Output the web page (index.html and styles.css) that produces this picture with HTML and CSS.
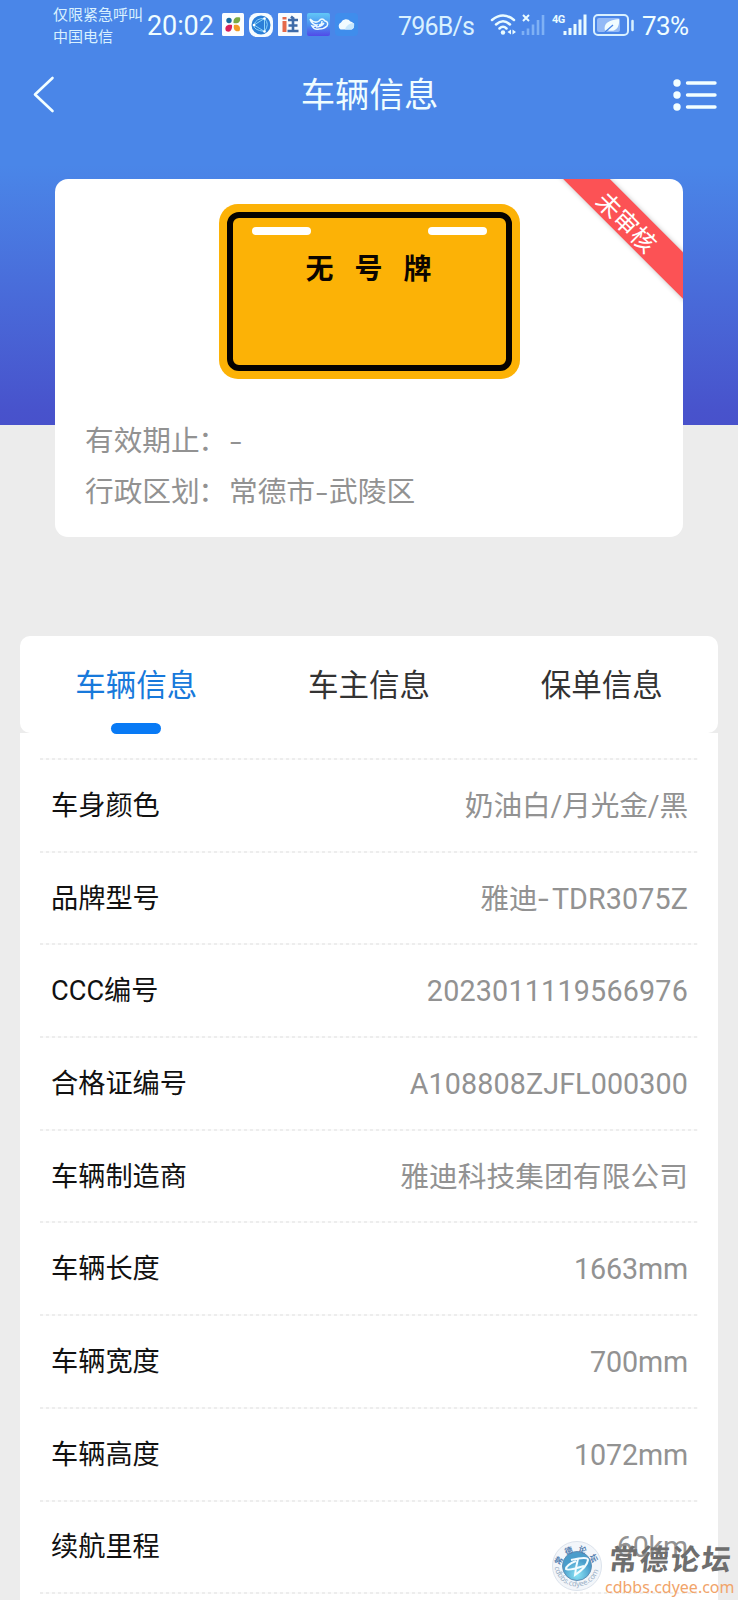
FILE: index.html
```html
<!DOCTYPE html>
<html lang="zh-CN">
<head>
<meta charset="utf-8">
<title>车辆信息</title>
<link rel="stylesheet" href="styles.css">
</head>
<body>
<div class="screen">
  <header class="hero">
    <div class="status">
      <div class="carrier"><span>仅限紧急呼叫</span><span>中国电信</span></div>
      <div class="clock">20:02</div>
      <div class="apps">
        <svg width="22" height="23" viewBox="0 0 22 23"><rect width="22" height="23" rx="1.5" fill="#fbfdff"/><circle cx="7" cy="7.5" r="2.7" fill="#176aa0"/><path d="M11.5 10C11 5 14 3.5 18 4.5C19 9 16 11 11.500 10Z" fill="#79a944"/><path d="M10 12C10.500 17 8 20 4 18C2 14 5 11 10 12Z" fill="#d81f5b"/><path d="M12 12C17 11 19 14 17.500 18C13 19.500 11 16 12 12Z" fill="#f29b24"/></svg>
        <svg width="24" height="24" viewBox="0 0 24 24"><rect width="24" height="24" rx="8" fill="#f7fcff"/><circle cx="12" cy="12" r="9.500" fill="#2b7fd8"/><path d="M5 12L15.500 5.500V18.500ZM15.500 5.500Q21 11 15.500 18.500M5 12Q4 17 15.500 18.500M5 12Q7 5 15.500 5.500" fill="none" stroke="#8fd4fa" stroke-width="1"/><circle cx="5" cy="12" r="1.300" fill="#fff"/><circle cx="15.500" cy="5.500" r="1.300" fill="#fff"/><circle cx="15.500" cy="18.500" r="1.300" fill="#fff"/></svg>
        <svg width="24" height="23" viewBox="0 0 24 23"><rect width="24" height="23" rx="1" fill="#f8fbff"/><path d="M6.500 8V19M6.500 4V6.500" stroke="#e5694a" stroke-width="4" fill="none"/><path d="M10 7H20M10.500 12.500H19.500M9.500 18H20.500M15 7V18M13 3.500L16 6" stroke="#3e6aa8" stroke-width="2.600" fill="none"/></svg>
        <svg width="23" height="23" viewBox="0 0 23 23"><defs><linearGradient id="sky" x2="0" y2="1"><stop stop-color="#61c8f7"/><stop offset=".55" stop-color="#4a8df0"/><stop offset="1" stop-color="#524ae8"/></linearGradient></defs><rect width="23" height="23" rx="2" fill="url(#sky)"/><path d="M3 6Q8 11 12 8Q15 4 18 8Q22 9 20 13Q17 16 12 16Q7 17 5 13Q8 14 10 12Q5 12 3 6M9 14Q14 14 17 10M12 12Q15 12 15 8" fill="none" stroke="#eefaff" stroke-width="1.500"/></svg>
        <svg width="24" height="23" viewBox="0 0 24 23"><rect width="23" height="23" rx="4" fill="#3f8dec"/><path d="M5.500 16.500A4 4 0 0 1 6 9.500A5.500 5.500 0 0 1 15.500 8.500A4.200 4.200 0 0 1 16.500 16.500Z" fill="#f2fbff"/><path d="M10 16.500Q12 10 19 10Q20 15 16.500 16.500Z" fill="#c8e7fc"/></svg>
      </div>
      <div class="speed">796B/s</div>
      <svg class="radio" width="147" height="26" viewBox="0 0 147 26">
        <g fill="none" stroke="#e9fbff" stroke-width="2.500" stroke-linecap="round"><path d="M2 8Q13 -1 24 8M6 12.500Q13 6 20 12.500M9.500 16.500Q13 13 16.500 16.500"/></g>
        <circle cx="13" cy="20.500" r="2.200" fill="#e9fbff"/><path d="M21 17.500V22.500L17.500 20ZM22.500 17.500V22.500L26 20Z" fill="#e9fbff"/>
        <path d="M33 3L39 9M39 3L33 9" stroke="#e9fbff" stroke-width="2"/>
        <path d="M33 19V23M38 16.500V23M43 12.500V23M48 8V23M53 3V23" stroke="#7fb1f5" stroke-width="2.600"/>
        <text x="62" y="11" class="net">4G</text>
        <path d="M75 19V23M80 16V23M85 12V23M90 7.500V23M95 2.500V23" stroke="#e9fbff" stroke-width="3"/>
        <rect x="104" y="3" width="34" height="20" rx="4" fill="none" stroke="#d8f0ff" stroke-width="2"/><rect x="107" y="6" width="23" height="14" rx="2" fill="#93b9f6"/><path d="M115 19C113 11 119 8 129 7C130 16 125 21 117 18Z" fill="#f1fcff"/><path d="M115 20L123 13" stroke="#4a86e8" stroke-width="1.300"/><path d="M142.500 9V18" stroke="#d8f0ff" stroke-width="2.500" stroke-linecap="round"/>
      </svg>
      <div class="battery">73%</div>
    </div>
    <nav class="navbar">
      <svg width="22" height="38" viewBox="0 0 22 38"><path d="M19.500 2L2 18.500L19.500 35" fill="none" stroke="#f3ffff" stroke-width="2.600" stroke-linecap="round" stroke-linejoin="round"/></svg>
      <h1 class="title">车辆信息</h1>
      <svg width="44" height="34" viewBox="0 0 44 34"><g fill="#f3ffff"><circle cx="4" cy="5" r="3.700"/><circle cx="4" cy="17" r="3.700"/><circle cx="4" cy="29" r="3.700"/></g><path d="M14.500 5H42M14.500 17H42M14.500 29H42" stroke="#f3ffff" stroke-width="3.400" stroke-linecap="round"/></svg>
    </nav>
  </header>

  <section class="card">
    <div class="ribbon">未审核</div>
    <div class="plate"><div class="plate-frame">
      <div class="slots"><i></i><i></i></div>
      <div class="plate-text">无号牌</div>
    </div></div>
    <div class="facts">
      <div class="fact"><span class="fact-label">有效期止<span class="colon">：</span></span><span class="dash">-</span></div>
      <div class="fact"><span class="fact-label">行政区划<span class="colon">：</span></span><span>常德市<span class="dash">-</span>武陵区</span></div>
    </div>
  </section>

  <section class="details">
    <div class="tabs">
      <div class="tab active">车辆信息</div>
      <div class="tab">车主信息</div>
      <div class="tab">保单信息</div>
    </div>
    <div class="list">
      <div class="row"><span>车身颜色</span><span class="value color">奶油白/月光金/黑</span></div>
      <div class="row"><span>品牌型号</span><span class="value">雅迪<span class="dash">-</span>TDR3075Z</span></div>
      <div class="row"><span>CCC编号</span><span class="value serial">2023011119566976</span></div>
      <div class="row"><span>合格证编号</span><span class="value">A108808ZJFL000300</span></div>
      <div class="row"><span>车辆制造商</span><span class="value">雅迪科技集团有限公司</span></div>
      <div class="row"><span>车辆长度</span><span class="value length">1663mm</span></div>
      <div class="row"><span>车辆宽度</span><span class="value length">700mm</span></div>
      <div class="row"><span>车辆高度</span><span class="value length">1072mm</span></div>
      <div class="row"><span>续航里程</span><span class="value length">60km</span></div>
    </div>
  </section>

  <div class="watermark">
    <svg class="seal" width="52" height="52" viewBox="0 0 52 52">
      <defs><radialGradient id="orb" cx=".5" cy=".8"><stop stop-color="#8ce4f5"/><stop offset="1" stop-color="#4a9dcb"/></radialGradient><path id="arcTop" d="M9 29A17 17 0 1 1 43 29"/><path id="arcBottom" d="M3.500 24A22.500 22.500 0 0 0 48.500 24"/></defs>
      <circle cx="26" cy="26" r="24.500" fill="#f3f6fa" stroke="#dce3ec"/><circle cx="26" cy="26" r="14.500" fill="url(#orb)" stroke="#608eb4"/>
      <path d="M20 20Q37 16 37 20Q36 27 24 35Q25 26 27 19M25 21Q15 25 15 29Q17 31 33 26" fill="none" stroke="#f2fcff" stroke-width="2"/>
      <text class="seal-cn"><textPath href="#arcTop" startOffset="3">常德论坛</textPath></text>
      <text class="seal-en"><textPath href="#arcBottom" startOffset="3">cdbbs.cdyee.com</textPath></text>
    </svg>
    <div class="mark-text"><div class="mark-name">常德论坛</div><div class="mark-url">cdbbs.cdyee.com</div></div>
  </div>
</div>
</body>
</html>
```
FILE: styles.css
```css
* { box-sizing: border-box; }
body { margin: 0; font-family: "Noto Sans", "Noto Sans CJK SC", sans-serif; }
.screen { position: relative; width: 738px; height: 1600px; overflow: hidden; background: #ececec; }
.hero { height: 425px; background: linear-gradient(#4a86e8 0, #4a86e8 165px, #4853cc 410px, #4851cb); color: #effdff; }
.status { display: flex; height: 50px; padding-left: 53px; white-space: nowrap; font-family: "Roboto", sans-serif; }
.carrier { width: 94px; padding-top: 3px; font-size: 15px; line-height: 22px; display: flex; flex-direction: column; color: #d9f1ff; font-family: "Noto Sans CJK SC", sans-serif; }
.clock { width: 75px; font-size: 27px; line-height: 53px; letter-spacing: -.1px; }
.apps { display: flex; gap: 5px; width: 176px; padding-top: 13px; }
.speed { width: 92px; font-size: 25px; line-height: 53px; letter-spacing: -.8px; color: #d9f1ff; }
.radio { margin-top: 12px; flex: none; }
.net { font: 700 11px "Roboto", sans-serif; fill: #e9fbff; letter-spacing: -.5px; }
.battery { margin-left: 5px; font-size: 26px; line-height: 53px; letter-spacing: -.6px; }
.navbar { display: flex; align-items: center; justify-content: space-between; height: 90px; padding: 0 21px 0 33px; }
.title { margin: -6px 0 0 11px; font: 400 34.400px/50px "Noto Sans CJK SC", sans-serif; }
.card { position: relative; width: 628px; height: 358px; margin: -246px auto 0 55px; padding: 25px 30px; overflow: hidden; border-radius: 13px; background: #fff; }
.ribbon { position: absolute; left: 472px; top: 24px; width: 200px; height: 33px; padding-left: 3px; transform: rotate(45deg); background: #fc5255; color: #fff; text-align: center; font: 24.500px/35px "Noto Sans CJK SC", sans-serif; box-shadow: 0 0 5px rgba(0,0,0,.25); }
.plate { width: 301px; height: 175px; margin: 0 auto 0 133.500px; padding: 8px; border-radius: 19px; background: #fcb206; }
.plate-frame { height: 159px; border: 6px solid #050200; border-radius: 12px; padding: 9px 19px; }
.slots { display: flex; justify-content: space-between; }
.slots i { width: 59px; height: 8px; border-radius: 4px; background: #fff; }
.plate-text { margin-top: 11px; padding-left: 20px; text-align: center; font: 700 28px/42px "Noto Sans CJK SC", sans-serif; letter-spacing: 21px; color: #0b0500; }
.facts { margin-top: 34px; font-size: 28.700px; line-height: 51px; color: #929292; font-family: "Noto Sans CJK SC", sans-serif; }
.fact { display: flex; }
.fact-label { width: 144px; }
.colon { margin-left: -1.500px; }
.dash { display: inline-block; width: 14px; text-align: left; transform: scaleX(1.35); transform-origin: left center; }
.details { margin: 99px 20px 0; }
.tabs { display: grid; grid-template-columns: repeat(3, 1fr); height: 97px; border-radius: 10px; background: #fff; }
.tab { display: flex; flex-direction: column; align-items: center; font: 30.500px/94px "Noto Sans CJK SC", sans-serif; color: #333; }
.tab.active { color: #1779db; }
.tab.active::after { content: ""; width: 50px; height: 11px; margin-top: -7px; border-radius: 6px; background: #087af5; }
.list { padding: 25px 17px 0; background: #fff; height: 880px; }
.list::before, .row::after { content: ""; display: block; height: 2px; background: repeating-linear-gradient(90deg, #ededed 0 3px, #fbfbfb 3px 6px); }
.list::before { margin: 0 3px; }
.row { display: grid; grid-template-columns: auto auto; grid-template-rows: 1fr 2px; justify-content: space-between; align-items: center; height: 92.700px; padding: 1px 13px 0 14px; font: 27.200px/40px "Roboto", "Noto Sans CJK SC", sans-serif; color: #111; }
.row::after { grid-column: 1 / -1; margin: 0 -10px 0 -11px; }
.value { font-size: 28.700px; letter-spacing: .1px; color: #929292; text-align: right; }
.color { letter-spacing: -.15px; }
.serial { letter-spacing: .2px; }
.length { letter-spacing: -.15px; }
.watermark { position: absolute; left: 551px; top: 1540px; display: flex; gap: 2px; }
.seal { overflow: visible; flex: none; }
.mark-text { width: 132px; }
.mark-name { margin-top: -4px; padding-left: 4px; font: 700 29px/42px "Noto Sans CJK SC", serif; letter-spacing: 2px; color: #6e6e6e; white-space: nowrap; transform: skewX(-6deg); }
.mark-url { font: 16px/18px "Noto Sans", sans-serif; color: #f1a46a; }
.seal-cn { font: 700 8px "Noto Sans CJK SC", sans-serif; letter-spacing: 4px; fill: #507cae; }
.seal-en { font: 7.500px "Noto Sans", sans-serif; fill: #9bb0c6; }
```
